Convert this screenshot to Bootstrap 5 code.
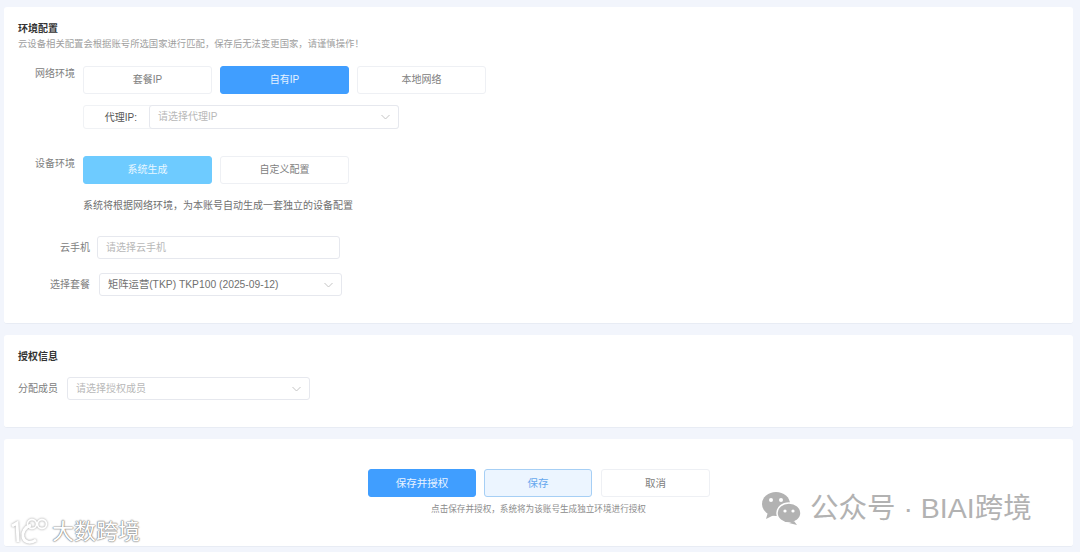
<!DOCTYPE html>
<html lang="zh"><head><meta charset="utf-8"><title>环境配置</title>
<link rel="stylesheet" href="https://cdn.jsdelivr.net/npm/bootstrap@5.3.0/dist/css/bootstrap.min.css">
<style>
html,body{height:552px;overflow:hidden}
body{background:#f2f5fc;font-family:"Liberation Sans","Noto Sans CJK SC",sans-serif;font-size:10px;color:#666;position:relative;padding:7px 7px 0 4px}
.panel{background:#fff;border-bottom:1px solid #e8ecf4;border-radius:3px;padding:15px 14px 0;margin-bottom:11px}
.p1{height:317px}.p2{height:93px}.p3{height:108px;padding-top:30px;margin-bottom:0}
.ttl{font-size:10px;font-weight:700;color:#333;line-height:14px;height:14px}
.sub{font-size:9.35px;color:#a0a0a0;line-height:12px;margin-top:2px}
.lab{font-size:10px;color:#808080;text-align:right;line-height:14px}
.choice{width:129px;height:28px;border:1px solid #eef0f4;border-radius:3px;background:#fff;color:#808080;font-size:10px;padding:0;line-height:26px;box-shadow:none}
.choice.on{background:#409eff;border-color:#409eff;color:#e6f2ff}
.choice.sky{background:#6ecbff;border-color:#6ecbff;color:#e9f7ff}
.fld{height:24px;border:1px solid #e6e8ee;border-radius:3px;background:#fff;font-size:10px;color:#b8b8b8;padding:0 8px;line-height:22px}
.fld svg{width:9px;height:6px;flex:none}
.proxy{width:316px;height:24px;margin:11px 0 0 65px;border:1px solid #f0f2f5;border-radius:3px}
.proxy b{width:65px;flex:none;text-align:right;padding-right:12px;font-size:10px;font-weight:400;color:#555}
.proxy .fld{width:251px;margin:-1px -1px -1px 0;height:24px}
.act{width:108px;height:28px;border-radius:3px;font-size:10.5px;padding:0;line-height:26px;border:1px solid #409eff}
.act.pri{background:#409eff;color:#e8f3ff}
.act.lite{background:#ecf5ff;border-color:#a6cff5;color:#66a8ee;margin-right:1px}
.act.plain{width:109px;background:#fff;border-color:#eef0f4;color:#808080}
.acts{padding-left:1px}
.tip{font-size:8.6px;color:#8c8c8c;line-height:12px;margin-top:6px;text-align:center}
.wx{position:absolute;left:761px;top:490px;color:#b2b2b2;font-size:28.5px;line-height:36px;white-space:nowrap}
.wx svg{width:41px;height:34px;margin-right:8px}
.dm{position:absolute;left:9px;top:517px;color:#fff;font-size:22px;line-height:30px;white-space:nowrap;text-shadow:0 0 2px #888,0 0 1px #777,0 0 1px #777}
.dm svg{width:42px;height:30px;margin-right:1px;filter:drop-shadow(0 0 1px #999)}
.rowlab1{width:57px;margin-top:1px}
.dev{margin-top:27px}
.note{margin:15px 0 0 65px;line-height:14px;color:#707070;font-size:10px}
.r1{margin-top:23px}.r2{margin-top:14px}
.r1 .lab,.r2 .lab{width:72px}
.phone{width:243px;margin-left:7px;height:23px}
.pack{width:243px;margin-left:9px;color:#707070;font-size:10.3px;height:23px}
.mem{margin-top:13px}
.memf{width:243px;margin-left:9px;height:23px}
</style></head><body>

<section class="panel p1">
  <div class="ttl">环境配置</div>
  <div class="sub">云设备相关配置会根据账号所选国家进行匹配，保存后无法变更国家，请谨慎操作！</div>
  <div class="d-flex mt-3">
    <div class="lab rowlab1">网络环境</div>
    <div class="d-flex gap-2 ms-2">
      <button class="btn choice">套餐IP</button><button class="btn choice on">自有IP</button><button class="btn choice">本地网络</button>
    </div>
  </div>
  <div class="proxy d-flex align-items-center"><b>代理IP:</b>
    <div class="fld d-flex justify-content-between align-items-center"><span>请选择代理IP</span><svg viewBox="0 0 9 6"><path d="M.5 1l4 4 4-4" fill="none" stroke="#c4c4c4"/></svg></div>
  </div>
  <div class="d-flex dev">
    <div class="lab rowlab1">设备环境</div>
    <div class="d-flex gap-2 ms-2">
      <button class="btn choice sky">系统生成</button><button class="btn choice">自定义配置</button>
    </div>
  </div>
  <div class="note">系统将根据网络环境，为本账号自动生成一套独立的设备配置</div>
  <div class="d-flex align-items-center r1">
    <div class="lab">云手机</div>
    <div class="fld phone">请选择云手机</div>
  </div>
  <div class="d-flex align-items-center r2">
    <div class="lab">选择套餐</div>
    <div class="fld pack d-flex justify-content-between align-items-center"><span>矩阵运营(TKP) TKP100 (2025-09-12)</span><svg viewBox="0 0 9 6"><path d="M.5 1l4 4 4-4" fill="none" stroke="#c4c4c4"/></svg></div>
  </div>
</section>

<section class="panel p2">
  <div class="ttl">授权信息</div>
  <div class="d-flex align-items-center mem">
    <div class="lab">分配成员</div>
    <div class="fld memf d-flex justify-content-between align-items-center"><span>请选择授权成员</span><svg viewBox="0 0 9 6"><path d="M.5 1l4 4 4-4" fill="none" stroke="#c4c4c4"/></svg></div>
  </div>
</section>

<section class="panel p3">
  <div class="d-flex justify-content-center gap-2 acts">
    <button class="btn act pri">保存并授权</button><button class="btn act lite">保存</button><button class="btn act plain">取消</button>
  </div>
  <div class="tip">点击保存并授权，系统将为该账号生成独立环境进行授权</div>
</section>

<div class="wx d-flex align-items-center">
  <svg viewBox="0 0 41 34" fill="#b2b2b2"><ellipse cx="15" cy="13" rx="14" ry="12"/><path d="M7 21l-2 7 8-4z"/><ellipse cx="28" cy="22" rx="12" ry="10" stroke="#fff" stroke-width="1.5"/><path d="M33 30l3 4-8-2z"/><circle cx="10" cy="9" r="2" fill="#fff"/><circle cx="20" cy="9" r="2" fill="#fff"/><circle cx="24" cy="20" r="1.6" fill="#fff"/><circle cx="32" cy="20" r="1.6" fill="#fff"/></svg>
  <span>公众号 · BIAI跨境</span>
</div>
<div class="dm d-flex align-items-center">
  <svg viewBox="0 0 42 30" fill="none" stroke="#fff" stroke-width="3"><path d="M3 9l5-3 1 19"/><path d="M22 8c-6 2-9 7-8 12s7 7 13 3"/><circle cx="23" cy="7" r="4.5" stroke-width="1.8"/><circle cx="33" cy="7" r="4.5" stroke-width="1.8"/></svg>
  <span>大数跨境</span>
</div>
</body></html>
